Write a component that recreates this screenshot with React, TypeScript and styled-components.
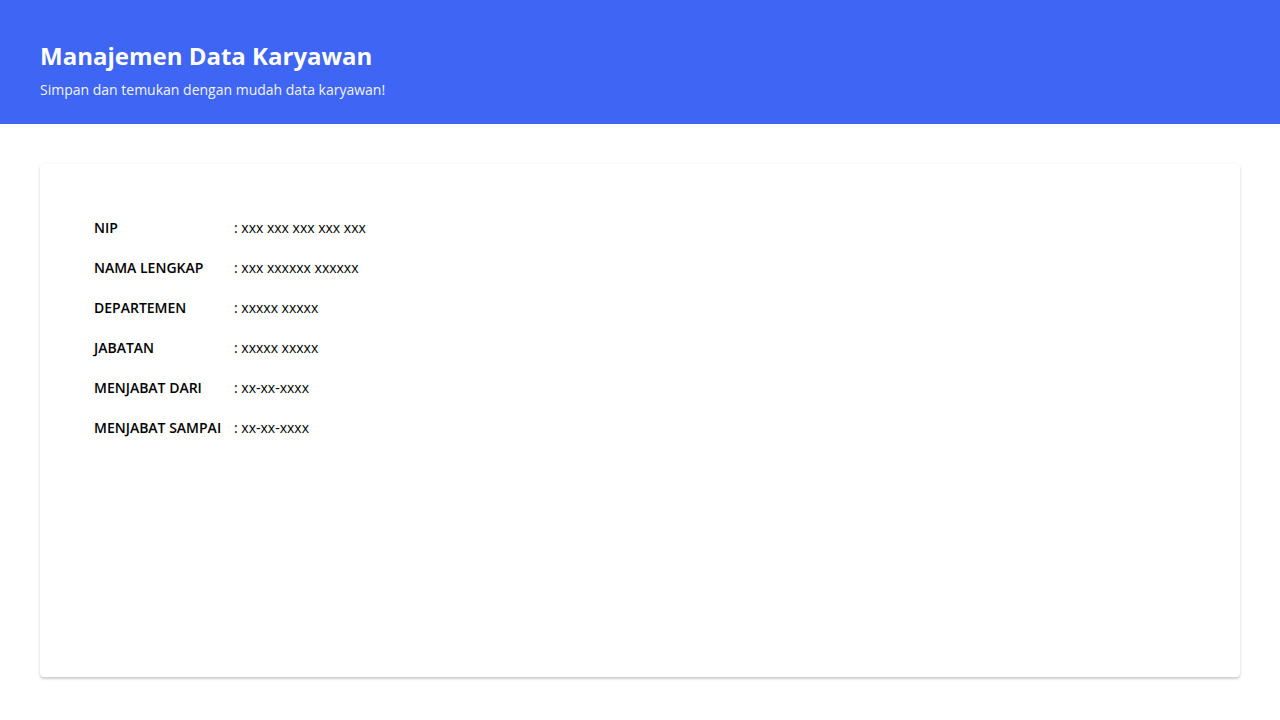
import React from "react";
import styled, { createGlobalStyle } from "styled-components";

const Global = createGlobalStyle`
  * { box-sizing: border-box; }
  html, body { margin: 0; padding: 0; background: #ffffff; }
  body { font-family: "Open Sans", "Noto Sans", sans-serif; color: #000; }
`;

const Header = styled.header`
  background: #3f65f4;
  height: 124px;
  padding: 40px 40px 0;
  color: #ffffff;
`;

const Title = styled.h1`
  margin: 0;
  font-size: 24px;
  font-weight: 700;
  line-height: 32px;
`;

const Subtitle = styled.p`
  margin: 7px 0 0;
  font-size: 14px;
  line-height: 22px;
  font-weight: 400;
  color: #f1f4ff;
`;

const Main = styled.main`
  padding: 40px;
`;

const Card = styled.section`
  background: #ffffff;
  border-radius: 4px;
  height: 513px;
  padding: 53px 54px;
  box-shadow: 0 2px 2px rgba(0, 0, 0, 0.14), 0 1px 5px rgba(0, 0, 0, 0.08),
    0 0 1px rgba(0, 0, 0, 0.04);
`;

const InfoGrid = styled.dl`
  margin: 0;
  display: grid;
  grid-template-columns: 140px auto;
  row-gap: 19px;
  justify-content: start;
  align-items: center;
`;

const Label = styled.dt`
  font-size: 14px;
  font-weight: 600;
  line-height: 21px;
`;

const Value = styled.dd`
  margin: 0;
  font-size: 14px;
  line-height: 21px;
  font-weight: 400;
`;

const rows: [string, string][] = [
  ["NIP", "xxx xxx xxx xxx xxx"],
  ["NAMA LENGKAP", "xxx xxxxxx xxxxxx"],
  ["DEPARTEMEN", "xxxxx xxxxx"],
  ["JABATAN", "xxxxx xxxxx"],
  ["MENJABAT DARI", "xx-xx-xxxx"],
  ["MENJABAT SAMPAI", "xx-xx-xxxx"],
];

export default function App() {
  return (
    <>
      <Global />
      <Header>
        <Title>Manajemen Data Karyawan</Title>
        <Subtitle>Simpan dan temukan dengan mudah data karyawan!</Subtitle>
      </Header>
      <Main>
        <Card>
          <InfoGrid>
            {rows.map(([l, v]) => (
              <React.Fragment key={l}>
                <Label>{l}</Label>
                <Value>: {v}</Value>
              </React.Fragment>
            ))}
          </InfoGrid>
        </Card>
      </Main>
    </>
  );
}
